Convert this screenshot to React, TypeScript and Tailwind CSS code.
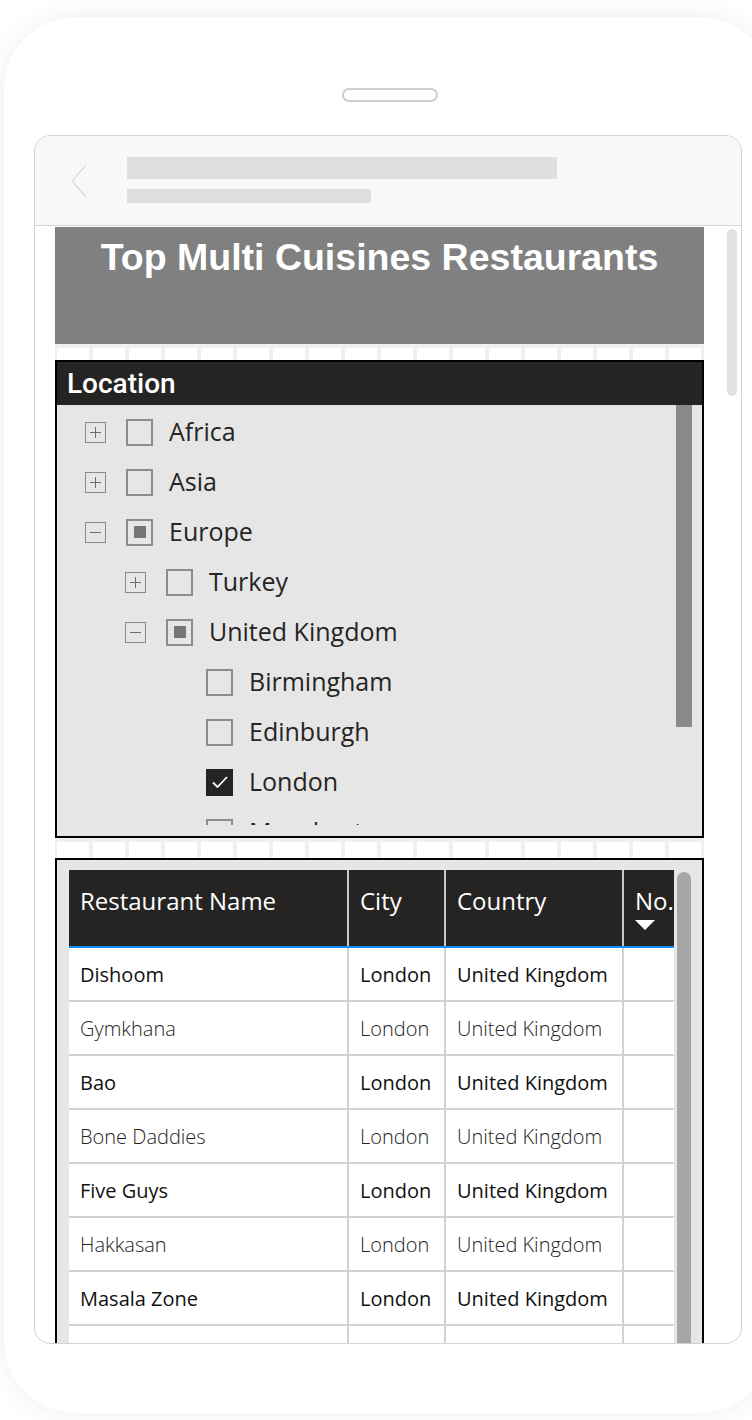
import React from "react"

type Node = {
  label: string
  level: number
  expand?: "plus" | "minus"
  state?: "empty" | "partial" | "checked"
}

const tree: Node[] = [
  { label: "Africa", level: 0, expand: "plus" },
  { label: "Asia", level: 0, expand: "plus" },
  { label: "Europe", level: 0, expand: "minus", state: "partial" },
  { label: "Turkey", level: 1, expand: "plus" },
  { label: "United Kingdom", level: 1, expand: "minus", state: "partial" },
  { label: "Birmingham", level: 2 },
  { label: "Edinburgh", level: 2 },
  { label: "London", level: 2, state: "checked" },
  { label: "Manchester", level: 2 },
]

const rows = [
  "Dishoom",
  "Gymkhana",
  "Bao",
  "Bone Daddies",
  "Five Guys",
  "Hakkasan",
  "Masala Zone",
  "",
]

const indent = ["pl-[28px]", "pl-[68px]", "pl-[108px]"]

function GridStrip({ tall }: { tall?: boolean }) {
  return (
    <div className={`${tall ? "h-[20px]" : "h-[16px]"} bg-[#f0f0f0] pt-[4px] pl-[2px] flex gap-[4px] overflow-hidden`}>
      {Array.from({ length: 18 }).map((_, i) => (
        <div key={i} className="w-[32px] shrink-0 h-full bg-white" />
      ))}
    </div>
  )
}

function ExpandBox({ kind }: { kind?: "plus" | "minus" }) {
  if (!kind) return <div className="w-[21px] h-[21px] shrink-0" />
  return (
    <div className="w-[21px] h-[21px] shrink-0 border border-[#8a8a8a] relative">
      <div className="absolute left-[4px] right-[4px] top-[9px] h-px bg-[#6e6e6e]" />
      {kind === "plus" && <div className="absolute top-[4px] bottom-[4px] left-[9px] w-px bg-[#6e6e6e]" />}
    </div>
  )
}

function Checkbox({ state }: { state?: Node["state"] }) {
  if (state === "checked") {
    return (
      <div className="w-[27px] h-[27px] shrink-0 bg-[#252423] flex items-center justify-center">
        <svg width="18" height="14" viewBox="0 0 18 14">
          <path d="M2 7.5 L6.5 12 L16 2" fill="none" stroke="white" strokeWidth="1.8" />
        </svg>
      </div>
    )
  }
  return (
    <div className="w-[27px] h-[27px] shrink-0 border-2 border-[#8c8c8c] flex items-center justify-center">
      {state === "partial" && <div className="w-[12px] h-[12px] bg-[#767676]" />}
    </div>
  )
}

export default function App() {
  return (
    <div className="w-[752px] h-[1420px] bg-white overflow-hidden pt-[17px] pl-[4px]">
      {/* phone body */}
      <div className="w-[768px] h-[1396px] rounded-[72px] bg-white shadow-[0_0_28px_rgba(0,0,0,0.07)] pt-[71px] pl-[30px]">
        <div className="ml-[308px] w-[96px] h-[14px] rounded-full border-2 border-[#cfcfcf]" />

        {/* screen */}
        <div className="mt-[33px] w-[708px] h-[1209px] rounded-[16px] border border-[#d2d2d2] overflow-hidden bg-white">
          <div className="h-[90px] bg-[#f9f8f7] border-b border-[#d6d6d6] flex">
            <svg className="ml-[36px] mt-[28px]" width="16" height="34" viewBox="0 0 16 34">
              <path d="M15 1 L1 17 L15 33" fill="none" stroke="#e0dedd" strokeWidth="1.6" />
            </svg>
            <div className="ml-[40px] mt-[21px]">
              <div className="w-[430px] h-[22px] bg-[#e1dfdd]" />
              <div className="mt-[10px] w-[244px] h-[14px] bg-[#e1dfdd]" />
            </div>
          </div>

          <div className="flex">
            <div className="ml-[20px] w-[649px] pt-px">
              {/* title */}
              <div className="h-[117px] bg-[#808080] pt-[9px] text-center">
                <h1 className="font-['Liberation_Sans',Arial,sans-serif] font-bold text-[37.5px] leading-[42px] text-white">
                  Top Multi Cuisines Restaurants
                </h1>
              </div>

              <GridStrip />

              {/* location slicer */}
              <div className="h-[478px] border-2 border-black flex flex-col">
                <div className="h-[43px] shrink-0 bg-[#252423] flex items-center pl-[10px] font-['Roboto',sans-serif] font-medium text-[28px] text-white">
                  Location
                </div>
                <div className="flex-1 min-h-0 bg-[#e6e6e6] relative pb-[11px] flex flex-col">
                  <div className="absolute right-[10px] top-0 w-[16px] h-[322px] bg-[#8a8a8a]" />
                  <div className="flex-1 min-h-0 overflow-hidden pt-[2px]">
                    {tree.map((n) => (
                      <div key={n.label} className={`h-[50px] flex items-center ${indent[n.level]}`}>
                        <ExpandBox kind={n.expand} />
                        <div className="ml-[20px]">
                          <Checkbox state={n.state} />
                        </div>
                        <span className="ml-[16px] font-['Open_Sans',sans-serif] text-[25px] text-[#252423]">
                          {n.label}
                        </span>
                      </div>
                    ))}
                  </div>
                </div>
              </div>

              <GridStrip tall />

              {/* restaurants table */}
              <div className="h-[600px] border-2 border-black bg-[#e6e6e6] pl-[12px] pt-[10px] relative font-['Open_Sans',sans-serif]">
                <div className="absolute left-[620px] top-[12px] w-[14px] h-[600px] rounded-t-full bg-[#a6a6a6]" />
                <div className="w-[605px] overflow-hidden">
                  <div className="w-[720px]">
                    <div className="h-[78px] bg-[#252423] border-b-2 border-[#118dff] flex text-white text-[24px] leading-[34px]">
                      <div className="w-[280px] shrink-0 border-r-2 border-[#c8c8c8] pl-[11px] pt-[14px]">Restaurant Name</div>
                      <div className="w-[97px] shrink-0 border-r-2 border-[#c8c8c8] pl-[11px] pt-[14px]">City</div>
                      <div className="w-[178px] shrink-0 border-r-2 border-[#c8c8c8] pl-[11px] pt-[14px]">Country</div>
                      <div className="w-[160px] shrink-0 pl-[11px] pt-[14px] flex flex-col whitespace-nowrap">
                        <span>No. of Restaurants</span>
                        <svg className="mt-[2px]" width="20" height="10" viewBox="0 0 20 10">
                          <path d="M0 0 L20 0 L10 10 Z" fill="white" />
                        </svg>
                      </div>
                    </div>
                    {rows.map((r, i) => {
                      const light = i % 2 === 1
                      const tone = light ? "text-[#252423] font-light" : "text-[#111111]"
                      return (
                        <div key={i} className={`h-[54px] bg-white border-b-2 border-[#d2d2d2] flex text-[20px] ${tone}`}>
                          <div className="w-[280px] shrink-0 border-r-2 border-[#d2d2d2] pl-[11px] pt-[2px] flex items-center">{r}</div>
                          <div className="w-[97px] shrink-0 border-r-2 border-[#d2d2d2] pl-[11px] pt-[2px] flex items-center">{r && "London"}</div>
                          <div className="w-[178px] shrink-0 border-r-2 border-[#d2d2d2] pl-[11px] pt-[2px] flex items-center">{r && "United Kingdom"}</div>
                          <div className="w-[160px] shrink-0" />
                        </div>
                      )
                    })}
                  </div>
                </div>
              </div>
            </div>

            {/* page scrollbar */}
            <div className="ml-[23px] mt-[3px] w-[10px] h-[167px] rounded-full bg-[#e1e1e1]" />
          </div>
        </div>
      </div>
    </div>
  )
}
